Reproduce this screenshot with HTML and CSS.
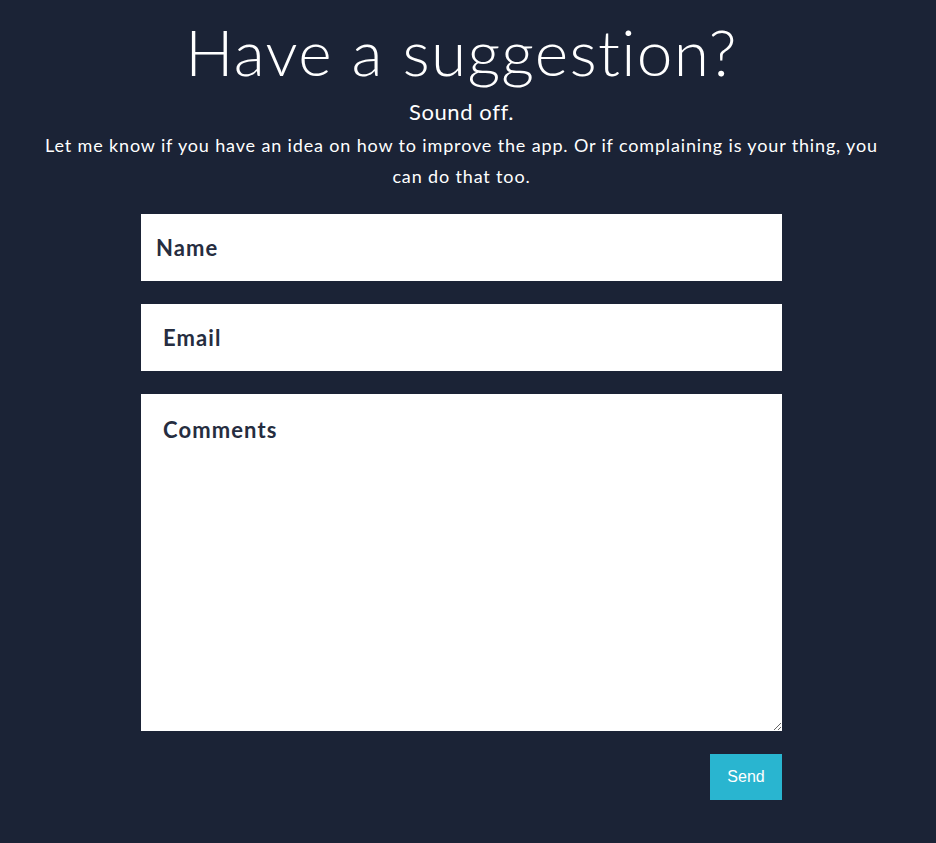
FILE: index.html
```html
<!DOCTYPE html>
<html>
<head>
<meta charset="utf-8">
<link rel="stylesheet" href="styles.css">
</head>
<body>
<div class="page">
  <h1 class="title">Have a suggestion?</h1>
  <p class="sub">Sound off.</p>
  <p class="lead">Let me know if you have an idea on how to improve the app. Or if complaining is your thing, you can do that too.</p>
  <form class="form">
    <input class="field field-name" type="text" placeholder="Name">
    <input class="field" type="email" placeholder="Email">
    <textarea class="field area" placeholder="Comments"></textarea>
    <div class="actions"><button class="send" type="button">Send</button></div>
  </form>
</div>
</body>
</html>
```

FILE: styles.css
```css
html, body {
  margin: 0;
  background: #1b2336;
  height: 100%;
}
.page {
  width: 923px;
  display: flex;
  flex-direction: column;
  align-items: center;
  font-family: "Lato", "Open Sans", sans-serif;
  color: #ffffff;
}
.title {
  margin: 12px 0 0;
  font-size: 64px;
  font-weight: 300;
  line-height: 80px;
  letter-spacing: 1.3px;
}
.sub {
  margin: 6px 0 0;
  font-size: 22px;
  line-height: 28px;
  letter-spacing: 0.6px;
}
.lead {
  margin: 4px 0 0;
  width: 860px;
  text-align: center;
  font-size: 18px;
  line-height: 31px;
  letter-spacing: 0.85px;
}
.form {
  width: 641px;
  margin-top: 22px;
  display: flex;
  flex-direction: column;
  gap: 23px;
}
.field {
  box-sizing: border-box;
  height: 67px;
  border: none;
  padding: 0 22px;
  font-family: "Lato", "Open Sans", sans-serif;
  font-size: 22px;
  font-weight: 700;
  letter-spacing: 1.1px;
  color: #1b2336;
  outline: none;
  display: block;
  width: 100%;
}
.field-name { padding-left: 15px; }
.field::placeholder { color: #262d40; opacity: 1; }
.area {
  height: 337px;
  padding-top: 22px;
  resize: vertical;
}
.actions {
  display: flex;
  justify-content: flex-end;
}
.send {
  width: 72px;
  height: 46px;
  border: none;
  background: #29b5d0;
  color: #ffffff;
  font-family: "Liberation Sans", Arial, sans-serif;
  font-size: 16px;
}
```
